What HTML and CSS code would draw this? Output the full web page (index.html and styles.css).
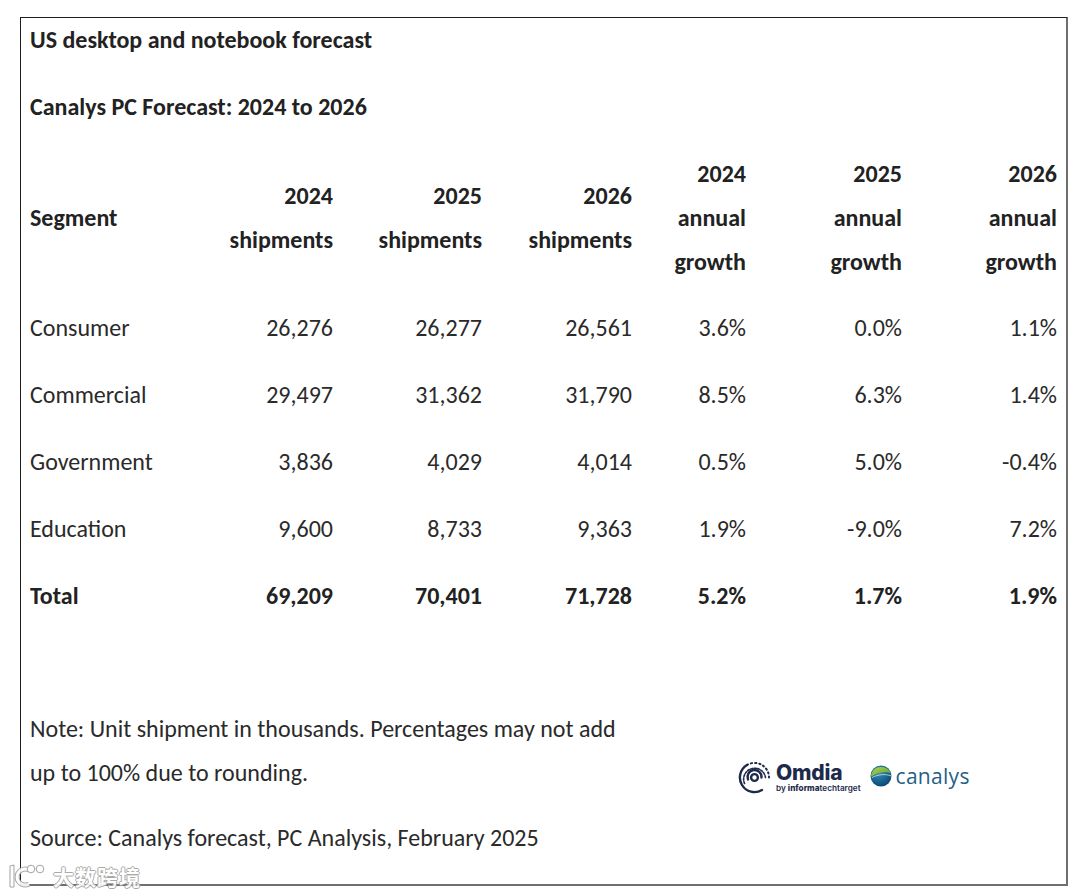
FILE: index.html
```html
<!DOCTYPE html>
<html lang="en">
<head>
<meta charset="utf-8">
<title>US desktop and notebook forecast</title>
<link rel="stylesheet" href="styles.css">
</head>
<body>
<div class="page">
  <div class="card">
    <h1 class="title">US desktop and notebook forecast</h1>
    <h2 class="subtitle">Canalys PC Forecast: 2024 to 2026</h2>
    <div class="grid">
      <div class="th th-left"><span>Segment</span></div>
      <div class="th"><span>2024<br>shipments</span></div>
      <div class="th"><span>2025<br>shipments</span></div>
      <div class="th"><span>2026<br>shipments</span></div>
      <div class="th"><span>2024<br>annual<br>growth</span></div>
      <div class="th"><span>2025<br>annual<br>growth</span></div>
      <div class="th"><span>2026<br>annual<br>growth</span></div>

      <div class="td td-left">Consumer</div>
      <div class="td">26,276</div>
      <div class="td">26,277</div>
      <div class="td">26,561</div>
      <div class="td">3.6%</div>
      <div class="td">0.0%</div>
      <div class="td">1.1%</div>

      <div class="td td-left">Commercial</div>
      <div class="td">29,497</div>
      <div class="td">31,362</div>
      <div class="td">31,790</div>
      <div class="td">8.5%</div>
      <div class="td">6.3%</div>
      <div class="td">1.4%</div>

      <div class="td td-left">Government</div>
      <div class="td">3,836</div>
      <div class="td">4,029</div>
      <div class="td">4,014</div>
      <div class="td">0.5%</div>
      <div class="td">5.0%</div>
      <div class="td">-0.4%</div>

      <div class="td td-left">Education</div>
      <div class="td">9,600</div>
      <div class="td">8,733</div>
      <div class="td">9,363</div>
      <div class="td">1.9%</div>
      <div class="td">-9.0%</div>
      <div class="td">7.2%</div>

      <div class="td td-left total">Total</div>
      <div class="td total">69,209</div>
      <div class="td total">70,401</div>
      <div class="td total">71,728</div>
      <div class="td total">5.2%</div>
      <div class="td total">1.7%</div>
      <div class="td total">1.9%</div>
    </div>

    <div class="footer">
      <p class="note">Note: Unit shipment in thousands. Percentages may not add<br>up to 100% due to rounding.</p>
      <div class="logos">
        <div class="omdia">
          <svg class="omdia-icon" width="33" height="33" viewBox="0 0 33 33">
            <g fill="none" stroke="#1d2a4c" stroke-linecap="round">
              <path d="M9 4 A14.5 14.5 0 0 1 31 16.5" stroke-width="2" stroke-dasharray="1.2 3"/>
              <path d="M9 4 A14.5 14.5 0 0 0 24 29" stroke-width="2.4"/>
              <path d="M6.5 22.5 A11 11 0 1 1 27.5 16.5" stroke-width="1.6" stroke-dasharray="2 1.5"/>
              <path d="M10 18.5 A7 7 0 1 1 23.5 16.5" stroke-width="2.4"/>
            </g>
            <circle cx="16.5" cy="16.5" r="3.4" fill="none" stroke="#1d2a4c" stroke-width="2.4"/>
          </svg>
          <div class="omdia-text">
            <span class="omdia-name">Omdia</span>
            <span class="omdia-by">by <b>informa</b>techtarget</span>
          </div>
        </div>
        <div class="canalys">
          <svg class="globe" width="22" height="22" viewBox="0 0 22 22">
            <defs>
              <radialGradient id="gb" cx="0.4" cy="0.3" r="0.8">
                <stop offset="0" stop-color="#3d8fb8"/>
                <stop offset="0.6" stop-color="#17608f"/>
                <stop offset="1" stop-color="#0d3f66"/>
              </radialGradient>
              <linearGradient id="gg" x1="0" y1="0" x2="1" y2="1">
                <stop offset="0" stop-color="#b6d64a"/>
                <stop offset="1" stop-color="#4f9a3c"/>
              </linearGradient>
            </defs>
            <circle cx="11" cy="11" r="10.5" fill="url(#gb)"/>
            <path d="M1.2 9.5 A10.5 10.5 0 0 1 21 8.5 C16 6 8 7.5 1.2 11.5 Z" fill="url(#gg)"/>
            <path d="M2 12.5 C8 9.5 15 8.5 21.4 11" fill="none" stroke="#e9f3dc" stroke-width="0.9" opacity="0.8"/>
          </svg>
          <span class="canalys-name">canalys</span>
        </div>
      </div>
    </div>
    <p class="source">Source: Canalys forecast, PC Analysis, February 2025</p>
  </div>

  <div class="watermark">
    <svg class="wm-logo" width="40" height="28" viewBox="0 0 40 28">
      <g fill="#fff" stroke="#9a9a9a" stroke-width="1">
        <path d="M3 4 L7 3 L7 25 L3 25 Z"/>
        <path d="M22 8 A8 8 0 1 0 22 22" fill="none" stroke-width="5" stroke="#a0a0a0"/>
        <path d="M22 8 A8 8 0 1 0 22 22" fill="none" stroke-width="3" stroke="#fff"/>
        <circle cx="24" cy="7" r="3.8"/>
        <circle cx="33" cy="7" r="3.8"/>
      </g>
    </svg>
    <span class="wm-text">大数跨境</span>
  </div>
</div>
</body>
</html>
```

FILE: styles.css
```css
html, body {
  margin: 0;
  padding: 0;
  background: #ffffff;
}

body {
  font-family: Carlito, Lato, "Noto Sans", sans-serif;
  color: #222222;
}

.page {
  position: relative;
  width: 1080px;
  height: 896px;
  padding-top: 17px;
  box-sizing: border-box;
}

.card {
  margin: 0 0 0 20px;
  width: 1048px;
  height: 869px;
  box-sizing: border-box;
  border-top: 1px solid #1e1e1e;
  border-left: 1px solid #1e1e1e;
  border-right: 2px solid #6f6f6f;
  border-bottom: 2px solid #6f6f6f;
  padding: 0 9px 0 9px;
}

.title,
.subtitle {
  margin: 0;
  font-size: 24px;
  font-weight: 700;
  line-height: 44px;
}

.subtitle {
  margin-top: 23px;
}

.grid {
  margin-top: 23px;
  display: grid;
  grid-template-columns: 154px 149px 149px 150px 114px 156px 155px;
  grid-template-rows: 142px repeat(5, 67px);
  font-size: 24px;
}

.th {
  align-self: start;
  height: 132px;
  display: flex;
  align-items: center;
  justify-content: flex-end;
  text-align: right;
  font-weight: 700;
  line-height: 44px;
}

.th-left {
  justify-content: flex-start;
  text-align: left;
}

.td {
  display: flex;
  align-items: center;
  justify-content: flex-end;
  line-height: 44px;
  color: #2a2a2a;
}

.td-left {
  justify-content: flex-start;
}

.td.total {
  font-weight: 700;
  color: #222222;
}

.footer {
  margin-top: 78px;
  display: flex;
  align-items: flex-end;
}

.note {
  margin: 0;
  width: 708px;
  font-size: 24px;
  line-height: 44px;
  color: #2a2a2a;
}

.logos {
  display: flex;
  align-items: center;
  gap: 9px;
  height: 36px;
}

.omdia {
  display: flex;
  align-items: center;
  gap: 5px;
}

.omdia-icon {
  display: block;
}

.omdia-text {
  display: flex;
  flex-direction: column;
  justify-content: center;
}

.omdia-name {
  font-family: Inter, "Noto Sans", sans-serif;
  font-weight: 800;
  font-size: 21px;
  line-height: 21px;
  color: #1d2a4c;
  letter-spacing: -0.2px;
}

.omdia-by {
  font-family: Inter, "Noto Sans", sans-serif;
  font-size: 8.2px;
  line-height: 10px;
  font-weight: 600;
  color: #1d2a4c;
  white-space: nowrap;
}

.omdia-by b {
  font-weight: 800;
}

.canalys {
  display: flex;
  align-items: center;
  gap: 4px;
  margin-top: -2px;
}

.globe {
  display: block;
}

.canalys-name {
  font-family: "Open Sans", sans-serif;
  font-size: 21px;
  line-height: 22px;
  color: #235f86;
  letter-spacing: 0.3px;
}

.source {
  margin: 21px 0 0 0;
  font-size: 24px;
  line-height: 44px;
  color: #2a2a2a;
}

.watermark {
  position: absolute;
  left: 7px;
  top: 862px;
  display: flex;
  align-items: center;
  gap: 6px;
  opacity: 0.9;
}

.wm-logo {
  display: block;
}

.wm-text {
  font-family: "Noto Sans CJK SC", sans-serif;
  font-weight: 700;
  font-size: 21px;
  line-height: 28px;
  color: #ffffff;
  text-shadow: 1px 0 0 #a0a0a0, -1px 0 0 #a0a0a0, 0 1px 0 #a0a0a0, 0 -1px 0 #a0a0a0;
  letter-spacing: 1px;
}
```
